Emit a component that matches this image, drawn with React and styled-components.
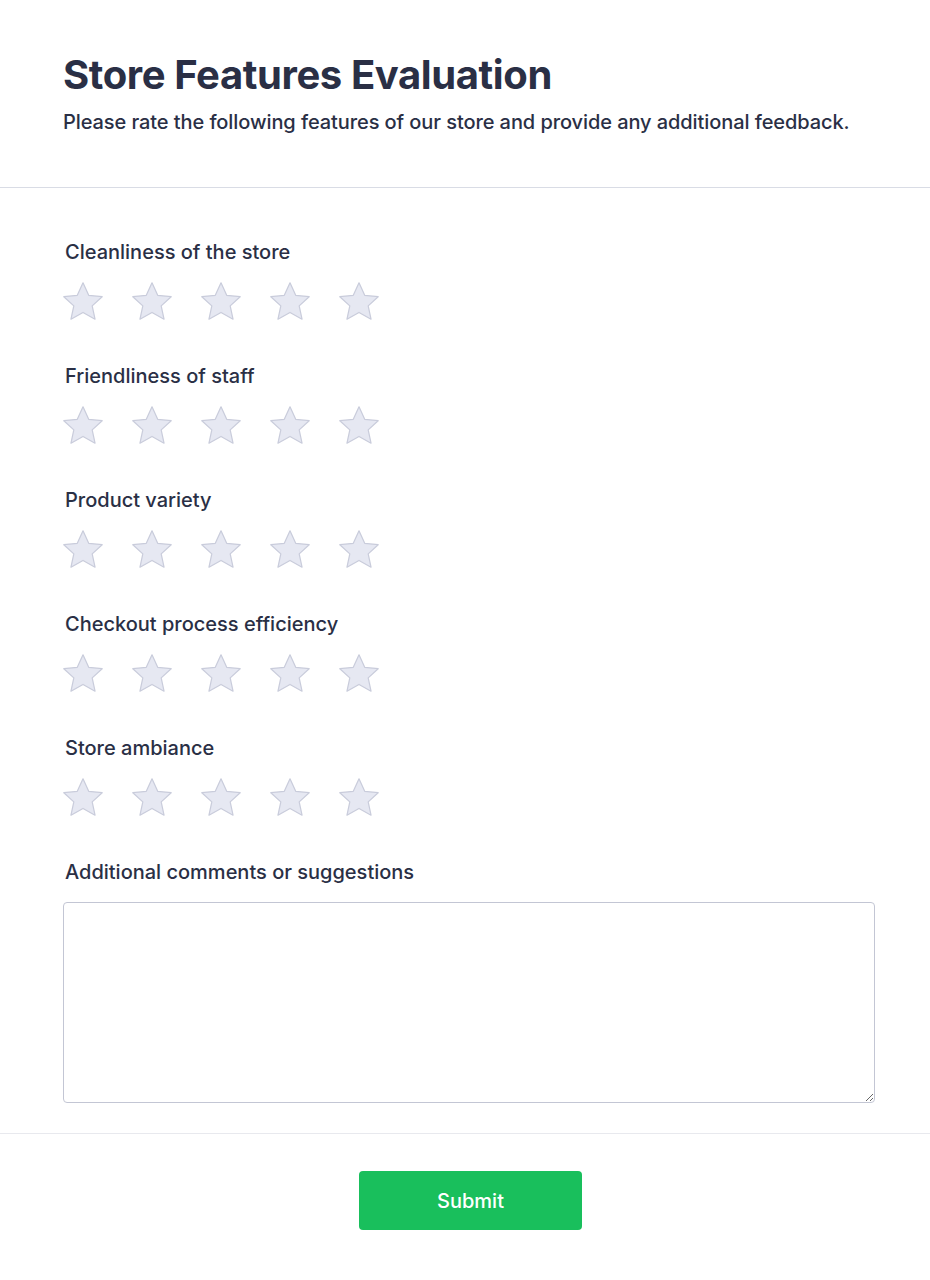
import React, { useState } from 'react';
import styled, { createGlobalStyle } from 'styled-components';

const GlobalStyle = createGlobalStyle`
  body {
    margin: 0;
    background: #ffffff;
    font-family: Inter, "Noto Sans", sans-serif;
    color: #2a2f45;
  }
`;

const Page = styled.div`
  width: 930px;
  min-height: 1280px;
  background: #ffffff;
`;

const Header = styled.header`
  padding: 51px 63px 0;
  height: 188px;
  box-sizing: border-box;
  border-bottom: 1px solid #d9dce5;
`;

const Title = styled.h1`
  margin: 0;
  font-size: 40px;
  line-height: 48px;
  font-weight: 700;
  color: #2a2f45;
  letter-spacing: -0.4px;
`;

const Subtitle = styled.p`
  margin: 11px 0 0;
  font-size: 20px;
  line-height: 24px;
  font-weight: 500;
  color: #2a2f45;
  letter-spacing: -0.08px;
`;

const Body = styled.div`
  padding: 52px 55px 30px 63px;
  border-bottom: 1px solid #e8e9ee;
`;

const Field = styled.div`
  margin-bottom: 44px;
  &:last-child {
    margin-bottom: 0;
  }
`;

const Label = styled.label`
  display: block;
  font-size: 20px;
  line-height: 24px;
  font-weight: 500;
  color: #2a2f45;
  margin: 0 0 18px 2px;
`;

const Stars = styled.div`
  display: flex;
  gap: 29px;
  height: 38px;
  align-items: center;
`;

const StarButton = styled.button`
  padding: 0;
  border: none;
  background: none;
  cursor: pointer;
  width: 40px;
  height: 38px;
  display: flex;
  align-items: center;
  justify-content: center;
`;

const TextArea = styled.textarea`
  display: block;
  width: 100%;
  height: 201px;
  box-sizing: border-box;
  border: 1px solid #c3c6d4;
  border-radius: 4px;
  padding: 10px 12px;
  font-family: inherit;
  font-size: 16px;
  color: #2a2f45;
  outline: none;
`;

const Footer = styled.div`
  display: flex;
  justify-content: center;
  padding: 37px 0 50px 11px;
`;

const SubmitButton = styled.button`
  width: 223px;
  height: 59px;
  border: none;
  border-radius: 4px;
  background: #19bf5c;
  color: #ffffff;
  font-family: inherit;
  font-size: 20px;
  font-weight: 500;
  cursor: pointer;
`;

function Star({ filled }) {
  return (
    <svg width="40" height="38" viewBox="2.2 2.2 19.6 18.6">
      <path
        d="M12 2.6l2.8 6.1 6.6.7-4.9 4.5 1.4 6.5L12 17.1l-5.9 3.3 1.4-6.5-4.9-4.5 6.6-.7z"
        fill={filled ? '#fbbf24' : '#e6e8f2'}
        stroke={filled ? '#f59e0b' : '#c9ccdb'}
        strokeWidth="0.6"
        strokeLinejoin="round"
      />
    </svg>
  );
}

const questions = [
  'Cleanliness of the store',
  'Friendliness of staff',
  'Product variety',
  'Checkout process efficiency',
  'Store ambiance',
];

export default function App() {
  const [ratings, setRatings] = useState({});

  return (
    <Page>
      <GlobalStyle />
      <Header>
        <Title>Store Features Evaluation</Title>
        <Subtitle>
          Please rate the following features of our store and provide any additional feedback.
        </Subtitle>
      </Header>
      <Body>
        {questions.map((q) => (
          <Field key={q}>
            <Label>{q}</Label>
            <Stars>
              {[1, 2, 3, 4, 5].map((n) => (
                <StarButton
                  key={n}
                  type="button"
                  onClick={() => setRatings({ ...ratings, [q]: n })}
                >
                  <Star filled={(ratings[q] || 0) >= n} />
                </StarButton>
              ))}
            </Stars>
          </Field>
        ))}
        <Field>
          <Label>Additional comments or suggestions</Label>
          <TextArea />
        </Field>
      </Body>
      <Footer>
        <SubmitButton type="button">Submit</SubmitButton>
      </Footer>
    </Page>
  );
}
